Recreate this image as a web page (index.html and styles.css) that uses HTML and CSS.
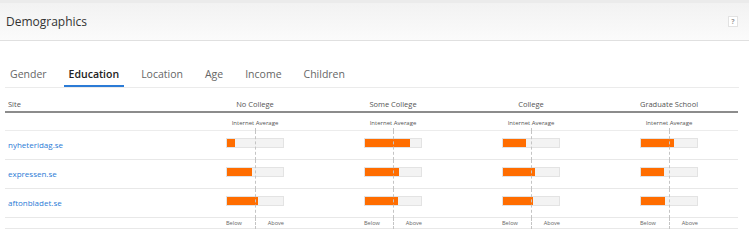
FILE: index.html
```html
<!DOCTYPE html>
<html>

<head>
  <meta name="viewport" content="width=device-width,initial-scale=1.0">
  <title>Demographics</title>
  <link rel="stylesheet" href="styles.css">
</head>

<body>

  <div class="panelHead">
    <h2 class="panelTitle">Demographics</h2>
    <span class="helpBtn">?</span>
  </div>

  <ul class="tabs">
    <li>Gender</li>
    <li class="active">Education</li>
    <li>Location</li>
    <li>Age</li>
    <li>Income</li>
    <li>Children</li>
  </ul>

  <table class="demoTable">
    <colgroup>
      <col class="siteCol">
      <col class="barCol">
      <col class="barCol">
      <col class="barCol">
      <col class="barCol">
    </colgroup>
    <thead>
      <tr class="colNames">
        <th class="site">Site</th>
        <th>No College</th>
        <th>Some College</th>
        <th>College</th>
        <th>Graduate School</th>
      </tr>
      <tr class="avgRow">
        <th></th>
        <th class="guide">Internet Average</th>
        <th class="guide">Internet Average</th>
        <th class="guide">Internet Average</th>
        <th class="guide">Internet Average</th>
      </tr>
    </thead>
    <tbody>
      <tr>
        <td class="site"><a href="#">nyheteridag.se</a></td>
        <td class="guide"><div class="bar"><div class="fill" style="width: 14%"></div></div></td>
        <td class="guide"><div class="bar"><div class="fill" style="width: 81%"></div></div></td>
        <td class="guide"><div class="bar"><div class="fill" style="width: 41%"></div></div></td>
        <td class="guide"><div class="bar"><div class="fill" style="width: 59%"></div></div></td>
      </tr>
      <tr>
        <td class="site"><a href="#">expressen.se</a></td>
        <td class="guide"><div class="bar"><div class="fill" style="width: 45%"></div></div></td>
        <td class="guide"><div class="bar"><div class="fill" style="width: 60%"></div></div></td>
        <td class="guide"><div class="bar"><div class="fill" style="width: 57%"></div></div></td>
        <td class="guide"><div class="bar"><div class="fill" style="width: 41%"></div></div></td>
      </tr>
      <tr>
        <td class="site"><a href="#">aftonbladet.se</a></td>
        <td class="guide"><div class="bar"><div class="fill" style="width: 55%"></div></div></td>
        <td class="guide"><div class="bar"><div class="fill" style="width: 59%"></div></div></td>
        <td class="guide"><div class="bar"><div class="fill" style="width: 53%"></div></div></td>
        <td class="guide"><div class="bar"><div class="fill" style="width: 43%"></div></div></td>
      </tr>
    </tbody>
    <tfoot>
      <tr>
        <td></td>
        <td class="guide"><div class="scale"><span>Below</span><span>Above</span></div></td>
        <td class="guide"><div class="scale"><span>Below</span><span>Above</span></div></td>
        <td class="guide"><div class="scale"><span>Below</span><span>Above</span></div></td>
        <td class="guide"><div class="scale"><span>Below</span><span>Above</span></div></td>
      </tr>
    </tfoot>
  </table>

</body>

</html>
```

FILE: styles.css
```css
body {
  margin: 0;
  background: #fff;
  font-family: "Open Sans", "Liberation Sans", Arial, sans-serif;
  color: #333;
}

.panelHead {
  display: flex;
  align-items: center;
  justify-content: space-between;
  height: 37px;
  padding: 0 11px 0 6px;
  border-top: 3px solid #ebebeb;
  border-bottom: 1px solid #e0e0e0;
  background: linear-gradient(#f2f2f2, #fbfbfb);
}

.panelTitle {
  margin: 0;
  font-size: 12px;
  font-weight: normal;
  color: #333;
}

.helpBtn {
  width: 8px;
  height: 9px;
  border: 1px solid #e2e2e2;
  background: #fff;
  font-size: 7px;
  font-weight: bold;
  line-height: 9px;
  text-align: center;
  color: #999;
}

.tabs {
  display: flex;
  gap: 12px;
  list-style-type: none;
  margin: 0 10px 0 5px;
  padding: 26px 0 0 0;
  border-bottom: 1px solid #ebebeb;
}

.tabs li {
  padding: 0 5px 4px 5px;
  font-size: 10.5px;
  line-height: 14px;
  color: #666;
  border-bottom: 2px solid transparent;
}

.tabs li.active {
  font-weight: 600;
  color: #222;
  border-bottom-color: #2b7bd6;
}

.demoTable {
  width: 733px;
  margin: 9px 0 0 5px;
  border-collapse: separate;
  border-spacing: 0;
  table-layout: fixed;
  font-size: 8px;
  line-height: 12px;
}

.siteCol {
  width: 181px;
}

.barCol {
  width: 138px;
}

.demoTable th,
.demoTable td {
  padding: 0;
  text-align: center;
  font-weight: normal;
  vertical-align: middle;
}

.demoTable .site {
  text-align: left;
  padding-left: 3px;
}

.colNames th {
  height: 14px;
  font-size: 7.5px;
  line-height: 14px;
  color: #555;
  border-bottom: 2px solid #8c8c8c;
}

.avgRow th {
  height: 13px;
  padding-top: 4px;
  font-size: 6px;
  line-height: 12px;
  color: #555;
  vertical-align: top;
  border-bottom: 1px solid #ececec;
}

tbody td {
  height: 28px;
  border-bottom: 1px solid #e8e8e8;
}

tbody td.guide {
  height: 23px;
  padding-bottom: 5px;
}

.site a {
  color: #2b7bd6;
  text-decoration: none;
}

tfoot td {
  height: 10px;
  padding-top: 4px;
  border-bottom: 1px solid #e8e8e8;
}

.guide {
  position: relative;
}

.guide::after {
  content: "";
  position: absolute;
  left: 69px;
  top: 0;
  bottom: -1px;
  border-left: 1px dashed #c4c4c4;
  z-index: 2;
}

.avgRow .guide::after {
  top: 15px;
}

.bar {
  display: flex;
  width: 56px;
  height: 8px;
  margin: 0 auto;
  border: 1px solid #e3e3e3;
  background: #f3f3f3;
}

.fill {
  height: 100%;
  background: #ff6d00;
}

.scale {
  display: flex;
  justify-content: space-between;
  width: 58px;
  margin: 0 auto;
  font-size: 5.6px;
  line-height: 10px;
  color: #666;
}
```
